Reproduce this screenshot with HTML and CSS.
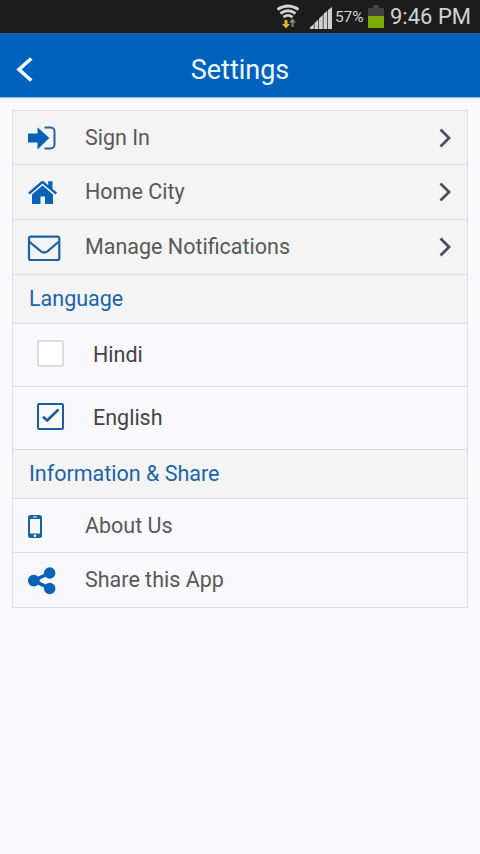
FILE: index.html
```html
<!DOCTYPE html>
<html lang="en">
<head>
<meta charset="utf-8">
<title>Settings</title>
<link rel="stylesheet" href="styles.css">
</head>
<body>
<div class="status">
  <svg class="wifi" width="24" height="26" viewBox="0 0 24 26" fill="none" stroke="#d2d2d0" stroke-width="2.8">
    <path d="M1.500 5.500Q12 -1.500 22.500 5.500"/><path d="M4.500 9.500Q12 4 19.500 9.500"/><path d="M7.500 13.200Q12 9.500 16.500 13.200"/>
    <path d="M8.500 20v-4h3v4H14l-4 4.500L6 20z" fill="#e5b32b" stroke="none"/>
    <path d="M15.500 23v-4.500H13l3.500-4 3.500 4h-2.500V23z" fill="#8a8580" stroke="none"/>
  </svg>
  <svg class="signal" width="22" height="22" viewBox="0 0 22 22" fill="#d0d0ce">
    <path d="M0 22v-1.500L3.800 17v5zM4.500 22v-6L8.300 12.500V22zM9 22V11.500L12.800 8v14zM13.500 22V7L17.300 3.700V22zM18 22V3l4-3v22z"/>
  </svg>
  <span class="percent">57%</span>
  <svg class="battery" width="16" height="23" viewBox="0 0 16 23"><path d="M5 0h6v3h5v8H0V3h5z" fill="#424342"/><path d="M0 11h16v12H0z" fill="#7fab08"/></svg>
  <span class="clock">9:46 PM</span>
</div>
<header class="bar">
  <svg class="back" width="20" height="28" viewBox="0 0 20 28"><path d="M17.300 2.500 5 13.500l12.300 11" fill="none" stroke="#f0fbff" stroke-width="3.600"/></svg>
  <h1 class="title">Settings</h1>
</header>
<main class="list">
  <div class="row">
    <span class="icon"><svg width="34" height="30" viewBox="0 0 34 30"><path d="M1 10.500h9.500V4.200L22.300 15 10.500 26.500V19.500H1z" fill="#0862b8"/><path d="M17.500 4.500h6a4 4 0 0 1 4 4v13a4 4 0 0 1-4 4h-6" fill="none" stroke="#2862a0" stroke-width="2"/></svg></span>
    <span class="label">Sign In</span>
    <svg class="chev" width="14" height="22" viewBox="0 0 14 22"><path d="M1.500 2.500 10 11 1.500 19.500"/></svg>
  </div>
  <div class="row tall">
    <span class="icon"><svg width="34" height="30" viewBox="0 0 34 30" fill="#0862b8"><path d="M5 17.500 15.500 8.500 26 17.500v9.500h-8v-7.500h-4.500v7.500H5z"/><path d="M1.200 15.500 14 4.600q1.500-1.200 3 0l4.200 3.600V4.300h4.300v7.600l4.500 3.600-1.500 2L15.500 6.600 2.700 17.500z"/></svg></span>
    <span class="label">Home City</span>
    <svg class="chev" width="14" height="22" viewBox="0 0 14 22"><path d="M1.500 2.500 10 11 1.500 19.500"/></svg>
  </div>
  <div class="row tall">
    <span class="icon"><svg width="34" height="30" viewBox="0 0 34 30" fill="none" stroke="#1b61a8" stroke-width="2.2"><rect x="2" y="4.700" width="30.300" height="23.300" rx="1.800"/><path d="M2 9.500 14 19.300q3.300 2.400 6.500 0L32 9.500"/></svg></span>
    <span class="label">Manage Notifications</span>
    <svg class="chev" width="14" height="22" viewBox="0 0 14 22"><path d="M1.500 2.500 10 11 1.500 19.500"/></svg>
  </div>
  <h2 class="section">Language</h2>
  <label class="option"><span class="check"></span><span>Hindi</span></label>
  <label class="option"><span class="check on"><svg width="23" height="23" viewBox="0 0 23 23"><path d="M4 11.700 8.200 15.500 19.500 4.500" fill="none" stroke="#1d5c9f" stroke-width="2.600"/></svg></span><span>English</span></label>
  <h2 class="section">Information &amp; Share</h2>
  <div class="row light">
    <span class="icon"><svg width="34" height="30" viewBox="0 0 34 30"><path fill-rule="evenodd" d="M3.500 4h9a2.500 2.500 0 0 1 2.500 2.500v18a2.500 2.500 0 0 1-2.500 2.500h-9A2.500 2.500 0 0 1 1 24.500v-18A2.500 2.500 0 0 1 3.500 4zM3 8v14.500h10V8zM6 5.400v1.200h4V5.400zM8 23.500a1.300 1.300 0 1 0 0 2.600 1.300 1.300 0 0 0 0-2.600z" fill="#1762a9"/></svg></span>
    <span class="label">About Us</span>
  </div>
  <div class="row tall light">
    <span class="icon"><svg width="34" height="30" viewBox="0 0 34 30" fill="#0862b8"><path d="M22.500 8 7 15.500l15.500 8" fill="none" stroke="#0862b8" stroke-width="3.600"/><circle cx="6.800" cy="15.600" r="5.900"/><circle cx="22.700" cy="8" r="5.700"/><circle cx="22.700" cy="23.500" r="5.700"/></svg></span>
    <span class="label">Share this App</span>
  </div>
</main>
</body>
</html>
```
FILE: styles.css
```css
* { box-sizing: border-box; }
body {
  margin: 0;
  min-height: 854px;
  background: #f8f8fd;
  font-family: Roboto, "Liberation Sans", sans-serif;
  color: #585858;
}
.status {
  height: 33px;
  background: #1b1c1b;
  display: flex;
  align-items: flex-start;
  padding: 4px 8px 0 276px;
  color: #d2d2d0;
}
.status svg { flex: none; }
.signal { margin: 3px 0 0 10px; }
.percent {
  flex: none;
  width: 33px;
  margin: 4px 0 0 3px;
  font-size: 15.500px;
  line-height: 19px;
  letter-spacing: -0.1px;
}
.battery { margin-top: 1px; }
.clock { margin-left: 6px; font-size: 22px; line-height: 25px; white-space: nowrap; }
.bar {
  height: 64px;
  background: #0062bd;
  border-top: 1px solid #195b9d;
  box-shadow: 0 1px 1px #9dbbe0;
  display: flex;
  align-items: center;
  padding: 8px 14px 0;
}
.title {
  flex: 1;
  margin: 0 20px 0 0;
  text-align: center;
  font-size: 27px;
  font-weight: 400;
  line-height: 32px;
  color: #effaff;
}
.list {
  margin: 13px 12px 0;
  border: 1px solid #dedee2;
  border-bottom: 0;
}
.row, .section, .option { border-bottom: 1px solid #dcdcde; }
.row {
  height: 54px;
  display: flex;
  align-items: center;
  padding: 0 14px;
  background: #f4f4f4;
  font-size: 21.500px;
}
.row.tall { height: 55px; }
.row.light { background: #f8f8fd; }
.icon { width: 58px; height: 30px; }
.icon svg { display: block; }
.label { flex: 1; padding-bottom: 1px; white-space: nowrap; }
.chev { fill: none; stroke: #46535e; stroke-width: 2.800; }
.section {
  height: 49px;
  margin: 0;
  padding-left: 16px;
  background: #f4f4f4;
  color: #1b64a8;
  font-size: 21.500px;
  font-weight: 400;
  line-height: 47px;
}
.option {
  height: 63px;
  display: flex;
  align-items: center;
  padding: 0 0 2px 24px;
  color: #444;
  font-size: 21.500px;
}
.check {
  width: 27px;
  height: 27px;
  margin: -1px 29px 0 0;
  border: 2px solid #dcdcdc;
  border-radius: 2px;
  background: #fff;
}
.check.on { border-color: #1d5c9f; background: #f8faff; }
.check svg { display: block; }
```
